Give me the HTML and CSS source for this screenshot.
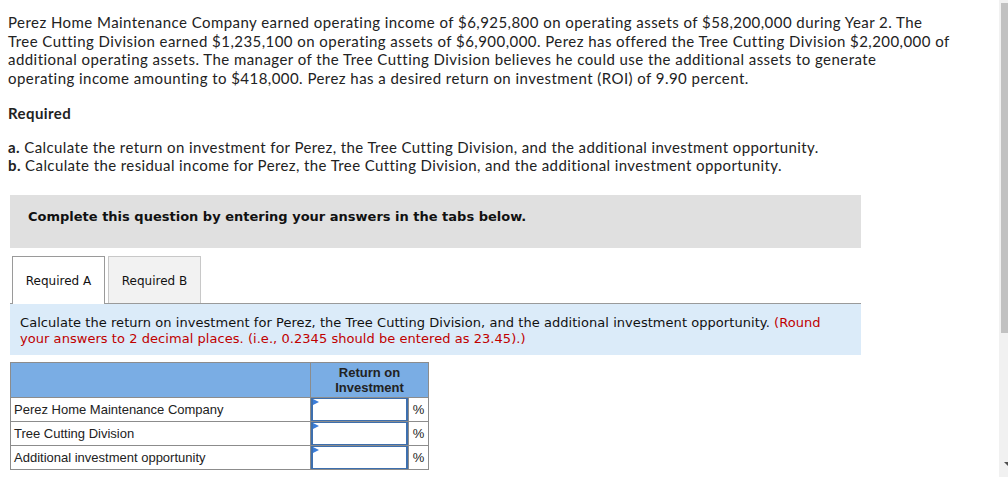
FILE: index.html
```html
<!DOCTYPE html>
<html lang="en">
<head>
<meta charset="utf-8">
<title>Return on investment</title>
<link rel="stylesheet" href="styles.css">
</head>
<body>
<div class="page">
  <main class="content">
    <p class="intro">Perez Home Maintenance Company earned operating income of $6,925,800 on operating assets of $58,200,000 during Year 2. The<br>Tree Cutting Division earned $1,235,100 on operating assets of $6,900,000. Perez has offered the Tree Cutting Division $2,200,000 of<br>additional operating assets. The manager of the Tree Cutting Division believes he could use the additional assets to generate<br>operating income amounting to $418,000. Perez has a desired return on investment (ROI) of 9.90 percent.</p>
    <h3 class="req-title">Required</h3>
    <div class="req-list">
      <div><b>a.</b> Calculate the return on investment for Perez, the Tree Cutting Division, and the additional investment opportunity.</div>
      <div><b>b.</b> Calculate the residual income for Perez, the Tree Cutting Division, and the additional investment opportunity.</div>
    </div>
    <div class="notice">Complete this question by entering your answers in the tabs below.</div>
    <div class="tabs">
      <div class="tab active">Required A</div>
      <div class="tab">Required B</div>
    </div>
    <div class="instruction">Calculate the return on investment for Perez, the Tree Cutting Division, and the additional investment opportunity. <span class="hint">(Round<br>your answers to 2 decimal places. (i.e., 0.2345 should be entered as 23.45).)</span></div>
    <table class="grid">
      <thead>
        <tr>
          <th class="c-label"></th>
          <th colspan="2" class="c-head">Return on<br>Investment</th>
        </tr>
      </thead>
      <tbody>
        <tr>
          <td class="c-label">Perez Home Maintenance Company</td>
          <td class="c-input"><div class="input"><span class="flag"></span></div></td>
          <td class="c-unit">%</td>
        </tr>
        <tr>
          <td class="c-label">Tree Cutting Division</td>
          <td class="c-input"><div class="input"><span class="flag"></span></div></td>
          <td class="c-unit">%</td>
        </tr>
        <tr>
          <td class="c-label">Additional investment opportunity</td>
          <td class="c-input"><div class="input"><span class="flag"></span></div></td>
          <td class="c-unit">%</td>
        </tr>
      </tbody>
    </table>
  </main>
  <div class="scrollbar">
    <div class="thumb"></div>
    <div class="spacer"></div>
    <div class="arrow"></div>
  </div>
</div>
</body>
</html>
```

FILE: styles.css
```css
html, body {
  margin: 0;
  padding: 0;
  background: #fff;
  overflow: hidden;
}
.page {
  display: flex;
  height: 477px;
}
.content {
  flex: 1;
  padding: 13px 0 0 8px;
  color: #222;
}
.intro {
  margin: 0;
  font-family: Lato, "Open Sans", sans-serif;
  font-size: 15px;
  line-height: 18.6px;
  letter-spacing: 0.45px;
  white-space: nowrap;
}
.req-title {
  margin: 17px 0 0;
  font-family: Lato, "Open Sans", sans-serif;
  font-size: 15px;
  line-height: 18px;
  letter-spacing: 0.42px;
  font-weight: bold;
}
.req-list {
  margin-top: 17px;
  font-family: Lato, "Open Sans", sans-serif;
  font-size: 15px;
  line-height: 17.5px;
  letter-spacing: 0.4px;
}
.notice {
  margin: 21px 0 0 2px;
  width: 851px;
  box-sizing: border-box;
  height: 53px;
  background: #e0e0e0;
  padding: 14px 0 0 18px;
  font-family: Verdana, "DejaVu Sans", sans-serif;
  font-size: 13px;
  line-height: 16px;
  font-weight: bold;
  color: #111;
}
.tabs {
  display: flex;
  gap: 3px;
  margin: 8px 0 0 2px;
  padding-left: 2px;
  width: 849px;
  border-bottom: 1px solid #9a9a9a;
  font-family: Verdana, "DejaVu Sans", sans-serif;
  font-size: 12px;
}
.tab {
  box-sizing: border-box;
  width: 93px;
  height: 47px;
  padding-top: 17px;
  text-align: center;
  background: #f2f2f2;
  border: 1px solid #c8c8c8;
  border-bottom: none;
  color: #111;
}
.tab.active {
  height: 48px;
  margin-bottom: -1px;
  background: #fff;
  border-color: #9a9a9a;
}
.instruction {
  margin-left: 2px;
  width: 851px;
  box-sizing: border-box;
  height: 51px;
  background: #dbebf9;
  padding: 11px 0 0 10px;
  font-family: Verdana, "DejaVu Sans", sans-serif;
  font-size: 13px;
  line-height: 16px;
  letter-spacing: 0.05px;
  color: #111;
  white-space: nowrap;
}
.hint {
  color: #c00000;
}
.grid {
  margin: 7px 0 0 2px;
  border-collapse: collapse;
  font-family: Arial, "Liberation Sans", sans-serif;
  font-size: 13px;
  color: #222;
}
.grid th, .grid td {
  border: 1px solid #8c8c8c;
  padding: 0;
}
.grid thead th {
  background: #7aade4;
  height: 34px;
}
.c-head {
  font-size: 13px;
  line-height: 15px;
  font-weight: bold;
  color: #222;
  text-align: center;
}
.grid th.c-label { width: 299px; }
.grid td.c-label {
  height: 23px;
  padding-left: 3px;
  text-align: left;
}
.c-input {
  width: 97px;
}
.input {
  position: relative;
  box-sizing: border-box;
  height: 23px;
  border: 2px solid #3d6fae;
  border-top-width: 1px;
  border-bottom-width: 1px;
  background: #fff;
}
.flag {
  position: absolute;
  left: 0;
  top: 0;
  width: 0;
  height: 0;
  border-top: 3px solid transparent;
  border-bottom: 3px solid transparent;
  border-left: 6px solid #3b7dd8;
}
.c-unit {
  width: 19px;
  text-align: center;
}
.scrollbar {
  width: 9px;
  background: #f1f1f1;
  display: flex;
  flex-direction: column;
  align-items: flex-end;
  padding-top: 3px;
  box-sizing: border-box;
}
.thumb {
  width: 7px;
  height: 330px;
  background: #c1c1c1;
}
.spacer { flex: 1; }
.arrow {
  width: 0;
  height: 0;
  margin: 0 0 11px;
  border-left: 4px solid transparent;
  border-top: 4px solid #505050;
}
```
